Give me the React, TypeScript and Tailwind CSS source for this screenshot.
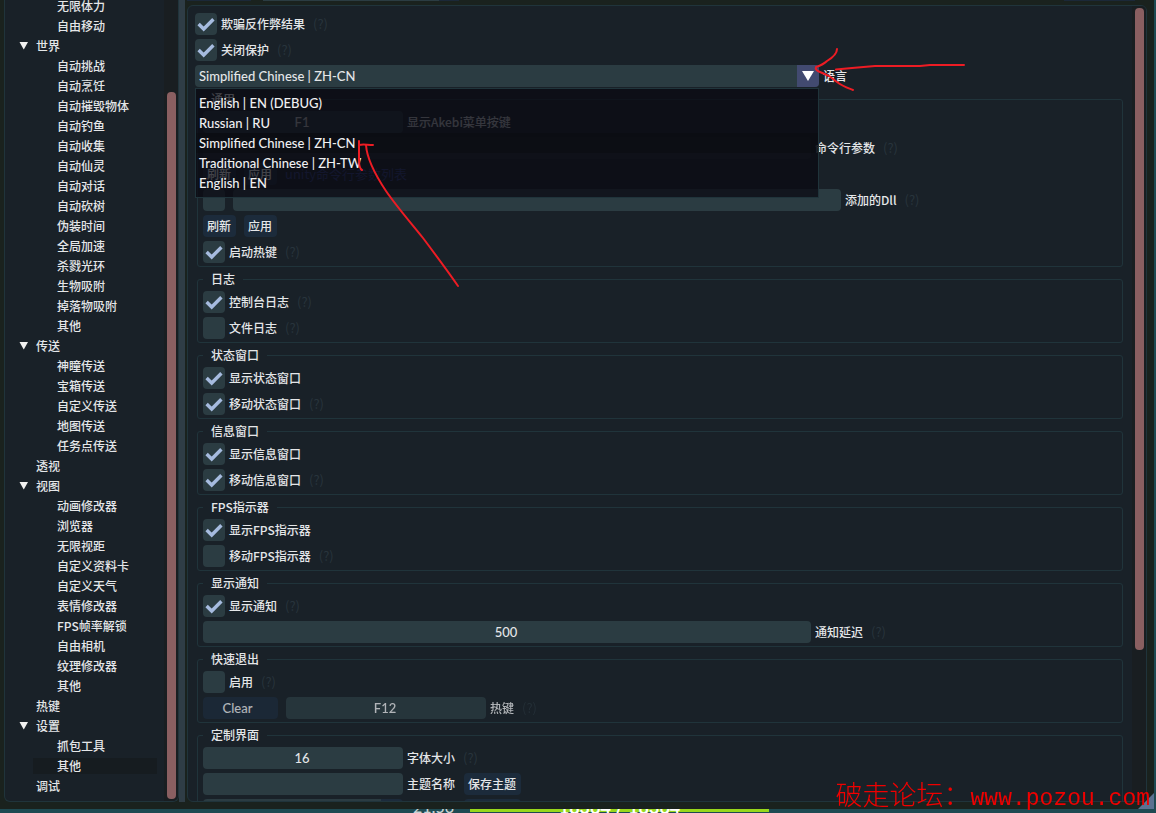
import { useState } from "react";
import type { ReactNode } from "react";

type TreeGroup = { label: string; items?: string[]; hideLabel?: boolean };

const tree: TreeGroup[] = [
  { label: "玩家", hideLabel: true, items: ["无限体力", "自由移动"] },
  {
    label: "世界",
    items: [
      "自动挑战", "自动烹饪", "自动摧毁物体", "自动钓鱼", "自动收集", "自动仙灵", "自动对话",
      "自动砍树", "伪装时间", "全局加速", "杀戮光环", "生物吸附", "掉落物吸附", "其他",
    ],
  },
  { label: "传送", items: ["神瞳传送", "宝箱传送", "自定义传送", "地图传送", "任务点传送"] },
  { label: "透视" },
  {
    label: "视图",
    items: [
      "动画修改器", "浏览器", "无限视距", "自定义资料卡", "自定义天气", "表情修改器",
      "FPS帧率解锁", "自由相机", "纹理修改器", "其他",
    ],
  },
  { label: "热键" },
  { label: "设置", items: ["抓包工具", "其他"] },
  { label: "调试" },
];

const languages = [
  "English | EN (DEBUG)",
  "Russian | RU",
  "Simplified Chinese | ZH-CN",
  "Traditional Chinese | ZH-TW",
  "English | EN",
];

const field = "h-[22px] rounded bg-[#2b3c42] pr-[2px] text-center font-['Lato','Noto_Sans_CJK_SC',sans-serif] text-[13px] text-[#e4e6e8] outline-none";

function Hint() {
  return <span className="ml-2 text-[13px] font-normal text-[#28343c]">(?)</span>;
}

function Row({ children }: { children: ReactNode }) {
  return <div className="flex h-[22px] items-center whitespace-nowrap">{children}</div>;
}

function Check({ label, hint, on = false }: { label: string; hint?: boolean; on?: boolean }) {
  const [checked, setChecked] = useState(on);
  return (
    <Row>
      <label className="flex items-center gap-1">
        <span className="relative size-[22px] shrink-0">
          <input
            type="checkbox"
            checked={checked}
            onChange={() => setChecked(!checked)}
            className="block size-[22px] appearance-none rounded bg-[#2b3c42]"
          />
          {checked && (
            <svg viewBox="0 0 22 22" className="pointer-events-none absolute inset-0" fill="none">
              <path d="M3.6 11 L8.7 16 L18.4 6.2" stroke="#a6bbdf" strokeWidth="3.4" />
            </svg>
          )}
        </span>
        {label}
      </label>
      {hint && <Hint />}
    </Row>
  );
}

function Button({ children }: { children: ReactNode }) {
  return <button className="h-[22px] rounded bg-[#1c2b3b] pr-[5px] pl-1">{children}</button>;
}

function Group({ title, children }: { title: string; children: ReactNode }) {
  return (
    <fieldset className="mr-2 mb-px ml-[2px] min-w-0 rounded-[3px] border border-[#20343b] pr-[7px] pb-[3px] pl-[5px]">
      <legend className="h-[23px] px-2 leading-[22px]">{title}</legend>
      <div className="flex flex-col gap-1">{children}</div>
    </fieldset>
  );
}

function Sidebar() {
  const [active, setActive] = useState("设置/其他");
  return (
    <nav className="flex w-[175px] shrink-0 justify-between overflow-hidden rounded-b-md border border-t-0 border-[#20343b] bg-[#192128]">
      <ul className="-mt-[2px] w-[152px]">
        {tree.map((group) => (
          <li key={group.label}>
            {!group.hideLabel && (
              <button className="mb-1 flex h-4 items-center pl-[14px]">
                <svg viewBox="0 0 10 8" className="mr-[7px] h-2 w-[10px]">
                  {group.items && <path d="M0.5 0 H9 L4.75 7.5 Z" fill="#f0f0f0" />}
                </svg>
                {group.label}
              </button>
            )}
            {group.items && (
              <ul>
                {group.items.map((item) => {
                  const id = `${group.label}/${item}`;
                  return (
                    <li key={id} className="mb-1 pl-7">
                      <button
                        onClick={() => setActive(id)}
                        className={`flex h-4 w-full items-center pl-6 ${active === id ? "bg-[#161c20]" : ""}`}
                      >
                        {item}
                      </button>
                    </li>
                  );
                })}
              </ul>
            )}
          </li>
        ))}
      </ul>
      <div className="w-[14px] bg-[#191e21] pt-[92px] pr-[2px] pb-[2px] pl-[3px]">
        <div className="h-full rounded bg-[#8a5f61]" />
      </div>
    </nav>
  );
}

function LanguageSelect() {
  const [language, setLanguage] = useState("Simplified Chinese | ZH-CN");
  return (
    <div className="flex h-[22px] items-center gap-1">
      <div className="relative w-2/3">
        <select
          id="language"
          value={language}
          onChange={(e) => setLanguage(e.target.value)}
          className="block h-[22px] w-full appearance-none rounded bg-[#2b3c42] pt-[2px] pl-1 font-['Lato',sans-serif] text-[13px] font-medium outline-none"
        >
          {languages.map((l) => (
            <option key={l}>{l}</option>
          ))}
        </select>
        <span className="pointer-events-none absolute top-0 right-0 flex size-[22px] items-center justify-center rounded-r bg-[#424a70]">
          <svg viewBox="0 0 12 10" className="h-[10px] w-3">
            <path d="M0 0 H12 L6 10 Z" fill="#fff" />
          </svg>
        </span>
        <ul className="absolute top-[23px] right-0 left-0 z-10 border border-[#20343b] bg-[#090a11]/74 py-1">
          {languages.map((l) => (
            <li key={l} className={l === language ? "bg-[#0a0b0f]/50" : ""}>
              <button
                onClick={() => setLanguage(l)}
                className="flex h-5 w-full items-center pt-[2px] pl-[3px] font-['Lato',sans-serif] text-[13px] font-medium text-[#f0f0f2]"
              >
                {l}
              </button>
            </li>
          ))}
        </ul>
      </div>
      <label htmlFor="language">语言</label>
    </div>
  );
}

function Settings() {
  return (
    <main className="flex min-w-0 flex-1 overflow-hidden rounded-md border border-[#20343b] bg-[#192128]">
      <div className="min-w-0 flex-1 pt-[7px] pr-px pl-[7px]">
        <div className="mb-px flex flex-col gap-1">
          <Check label="欺骗反作弊结果" hint on />
          <Check label="关闭保护" hint on />
          <LanguageSelect />
        </div>

        <Group title="通用">
          <div className="opacity-75">
            <Row>
              <input id="menu-key" readOnly value="F1" className={`${field} mr-1 w-[200px]`} />
              <label htmlFor="menu-key">显示Akebi菜单按键</label>
            </Row>
          </div>
          <Row>
            <input id="args" readOnly className="mr-1 h-[22px] w-2/3 rounded bg-[#20292f] outline-none" />
            <label htmlFor="args">命令行参数</label>
            <Hint />
          </Row>
          <Row>
            <div className="flex items-center gap-2">
              <Button>刷新</Button>
              <Button>应用</Button>
              <span className="text-[13px] font-normal text-[#2f3c7c]">unity命令行参数列表</span>
            </div>
          </Row>
          <Row>
            <input type="checkbox" aria-label="Dll" className="mr-2 size-[22px] appearance-none rounded bg-[#2b3c42]" />
            <input id="dll" className={`${field} mr-1 w-2/3`} />
            <label htmlFor="dll">添加的Dll</label>
            <Hint />
          </Row>
          <Row>
            <div className="flex gap-2">
              <Button>刷新</Button>
              <Button>应用</Button>
            </div>
          </Row>
          <Check label="启动热键" hint on />
        </Group>

        <Group title="日志">
          <Check label="控制台日志" hint on />
          <Check label="文件日志" hint />
        </Group>

        <Group title="状态窗口">
          <Check label="显示状态窗口" on />
          <Check label="移动状态窗口" hint on />
        </Group>

        <Group title="信息窗口">
          <Check label="显示信息窗口" on />
          <Check label="移动信息窗口" hint on />
        </Group>

        <Group title="FPS指示器">
          <Check label="显示FPS指示器" on />
          <Check label="移动FPS指示器" hint />
        </Group>

        <Group title="显示通知">
          <Check label="显示通知" hint on />
          <Row>
            <input id="delay" defaultValue="500" className={`${field} mr-1 w-2/3`} />
            <label htmlFor="delay">通知延迟</label>
            <Hint />
          </Row>
        </Group>

        <Group title="快速退出">
          <Check label="启用" hint />
          <div className="opacity-75">
            <Row>
              <button className="mr-2 h-[22px] w-[75px] rounded bg-[#1c2b3b] pt-[2px] pr-[6px] font-['Lato',sans-serif] text-[13px] font-medium">Clear</button>
              <input id="exit-key" readOnly value="F12" className={`${field} mr-1 w-[200px]`} />
              <label htmlFor="exit-key">热键</label>
              <Hint />
            </Row>
          </div>
        </Group>

        <Group title="定制界面">
          <Row>
            <input id="font-size" defaultValue="16" className={`${field} mr-1 w-[200px]`} />
            <label htmlFor="font-size">字体大小</label>
            <Hint />
          </Row>
          <Row>
            <input id="theme-name" className={`${field} mr-1 w-[200px]`} />
            <label htmlFor="theme-name" className="mr-[9px]">主题名称</label>
            <Button>保存主题</Button>
          </Row>
          <Row>
            <div className="flex w-[200px] overflow-hidden rounded">
              <select aria-label="主题" className="h-[22px] flex-1 appearance-none bg-[#2b3c42]" />
              <div className="w-[22px] bg-[#1c2b3b]" />
            </div>
            <button aria-label="删除主题" className="ml-[61px] h-[22px] w-[57px] rounded bg-[#1c2b3b]" />
          </Row>
        </Group>
      </div>
      <div className="w-[14px] shrink-0 bg-[#191e21] pt-[2px] pl-[3px]">
        <div className="h-[81%] w-[9px] rounded bg-[#8a5f61]" />
      </div>
    </main>
  );
}

// Hand-drawn red arrows pointing at the combo button and the language entry
function Arrows() {
  return (
    <svg
      viewBox="0 0 1156 813"
      className="pointer-events-none absolute top-0 left-0 z-20 h-[813px] w-[1156px]"
      fill="none"
      stroke="#ed1c24"
      strokeWidth="2"
      strokeLinecap="round"
      strokeLinejoin="round"
    >
      <path d="M837 49 C837 54 832 58 827 61 C824 64 819 66 816 67 C815 69 817 71 820 72 L829 76 L837 82 C842 86 848 88 853 90" />
      <path d="M836 69.500 L852 68 L875 66 H920 L930 65 H964" />
      <path d="M359 141 V160 C359 165 360 169 362 170" />
      <path d="M359 145 C363 144 367 145 373 145" />
      <path d="M366 145 C367 160 376 176 386 191 C397 207 411 223 423 238 C435 254 447 270 458 286" />
    </svg>
  );
}

export default function App() {
  return (
    <div className="relative flex h-screen flex-col overflow-hidden bg-[#1e4a52] font-['Noto_Sans_CJK_SC',sans-serif] text-[12px] font-medium text-[#e4e6e8]">
      <div className="mr-[2px] flex min-h-0 flex-1 bg-[#1a221e] pr-[7px] pb-[7px] pl-1">
        <Sidebar />
        <div className="w-[6px] shrink-0 bg-[#2f3d46]" />
        <div className="ml-[2px] flex min-w-0 flex-1 flex-col">
          <div className="flex h-[5px] shrink-0 items-start">
            <div className="h-px w-16 bg-[#1b2838]" />
            <div className="ml-3 h-px w-44 bg-[#2b3c42]" />
            <div className="h-px w-5 bg-[#1b2838]" />
            <div className="mr-3 ml-auto h-px w-[71px] bg-[#1b2838]" />
          </div>
          <Settings />
        </div>
      </div>

      <footer className="flex h-1 shrink-0 overflow-hidden">
        <span className="ml-[413px] -mt-2 h-3 w-[57px] shrink-0 font-['Lato'] text-[16px] leading-3 text-[#c9d3d4]">21:56</span>
        <div className="h-[3px] w-[299px] shrink-0 bg-[#98d81c] text-center">
          <span className="-mt-2 block font-['Lato'] text-[18px] leading-3 font-bold text-white">18364 / 18364</span>
        </div>
      </footer>

      <svg viewBox="0 0 16 16" className="absolute right-[2px] bottom-1 size-4">
        <path d="M16 0 V16 H0 Z" fill="#5b7190" />
      </svg>
      <p className="absolute right-[6px] bottom-0 z-30 flex items-baseline whitespace-nowrap font-light text-[#f00000]">
        <span className="text-[27px] leading-7">破走论坛：</span>
        <span className="font-['Liberation_Mono',monospace] text-[23px] leading-7 font-normal">www.pozou.com</span>
      </p>
      <Arrows />
    </div>
  );
}
